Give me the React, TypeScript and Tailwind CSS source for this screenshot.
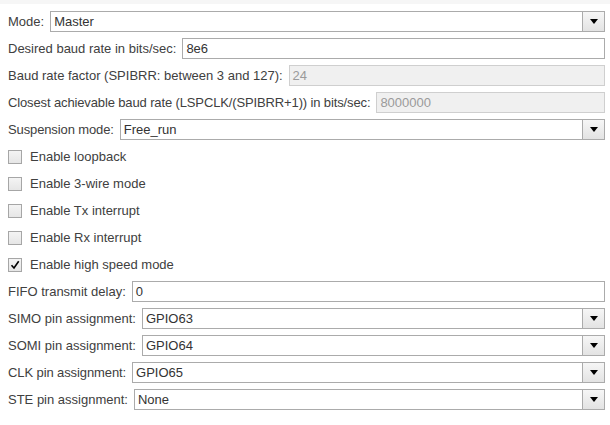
import React from "react";

const font = { fontFamily: '"Liberation Sans", Arial, sans-serif' };

function Arrow() {
  return (
    <svg width="8" height="5" viewBox="0 0 8 5" className="block">
      <polygon points="0,0 8,0 4,5" fill="#000" />
    </svg>
  );
}

function Label({ children, tight }: { children: React.ReactNode; tight?: string }) {
  return (
    <span className={"whitespace-nowrap text-[13px] text-[#404040] leading-none " + (tight ?? "")}>
      {children}
    </span>
  );
}

function Select({ label, value, tight }: { label: string; value: string; tight?: string }) {
  return (
    <div className="flex items-center h-[21px] gap-[6px]">
      <Label tight={tight}>{label}</Label>
      <div className="flex-1 flex h-[21px] border border-[#ababab] bg-white">
        <div className="flex-1 flex items-center pl-[3px] text-[13px] text-[#333]">{value}</div>
        <div className="w-[22px] flex items-center justify-center border-l border-[#ababab] bg-gradient-to-b from-[#f6f6f6] to-[#e3e3e3]">
          <Arrow />
        </div>
      </div>
    </div>
  );
}

function Input({
  label,
  value,
  disabled,
  tight,
}: {
  label: string;
  value: string;
  disabled?: boolean;
  tight?: string;
}) {
  return (
    <div className="flex items-center h-[21px] gap-[6px]">
      <Label tight={tight}>{label}</Label>
      <div
        className={
          disabled
            ? "flex-1 flex items-center h-[21px] border border-[#cfcfcf] bg-[#f0f0f0] pl-[3px] text-[13px] text-[#9a9a9a]"
            : "flex-1 flex items-center h-[21px] border border-[#ababab] bg-white pl-[3px] text-[13px] text-[#333]"
        }
      >
        {value}
      </div>
    </div>
  );
}

function Check({ label, checked }: { label: string; checked?: boolean }) {
  return (
    <div className="flex items-center h-[21px] gap-[8px]">
      <div className="w-[14px] h-[14px] border border-[#a6a6a6] bg-gradient-to-b from-[#f4f4f4] to-[#e6e6e6] flex items-center justify-center">
        {checked && (
          <svg width="10" height="10" viewBox="0 0 10 10" className="block">
            <path d="M1.5 5.2 L4 8 L8.7 1.2" fill="none" stroke="#000" strokeWidth="1.6" />
          </svg>
        )}
      </div>
      <Label>{label}</Label>
    </div>
  );
}

export default function App() {
  return (
    <div style={font} className="w-[610px] h-[425px] bg-white overflow-hidden">
      <div className="h-[4px] bg-[#f6f6f6]" />
      <div className="pt-[7px] pl-[8px] pr-[5px] flex flex-col gap-[6px]">
        <Select label="Mode:" value="Master" />
        <Input label="Desired baud rate in bits/sec:" value="8e6" />
        <Input label="Baud rate factor (SPIBRR: between 3 and 127):" value="24" disabled />
        <Input
          label="Closest achievable baud rate (LSPCLK/(SPIBRR+1)) in bits/sec:"
          value="8000000"
          disabled
          tight="tracking-[-0.13px]"
        />
        <Select label="Suspension mode:" value="Free_run" tight="tracking-[-0.12px]" />
        <Check label="Enable loopback" />
        <Check label="Enable 3-wire mode" />
        <Check label="Enable Tx interrupt" />
        <Check label="Enable Rx interrupt" />
        <Check label="Enable high speed mode" checked />
        <Input label="FIFO transmit delay:" value="0" />
        <Select label="SIMO pin assignment:" value="GPIO63" />
        <Select label="SOMI pin assignment:" value="GPIO64" />
        <Select label="CLK pin assignment:" value="GPIO65" tight="tracking-[-0.1px]" />
        <Select label="STE pin assignment:" value="None" />
      </div>
    </div>
  );
}
